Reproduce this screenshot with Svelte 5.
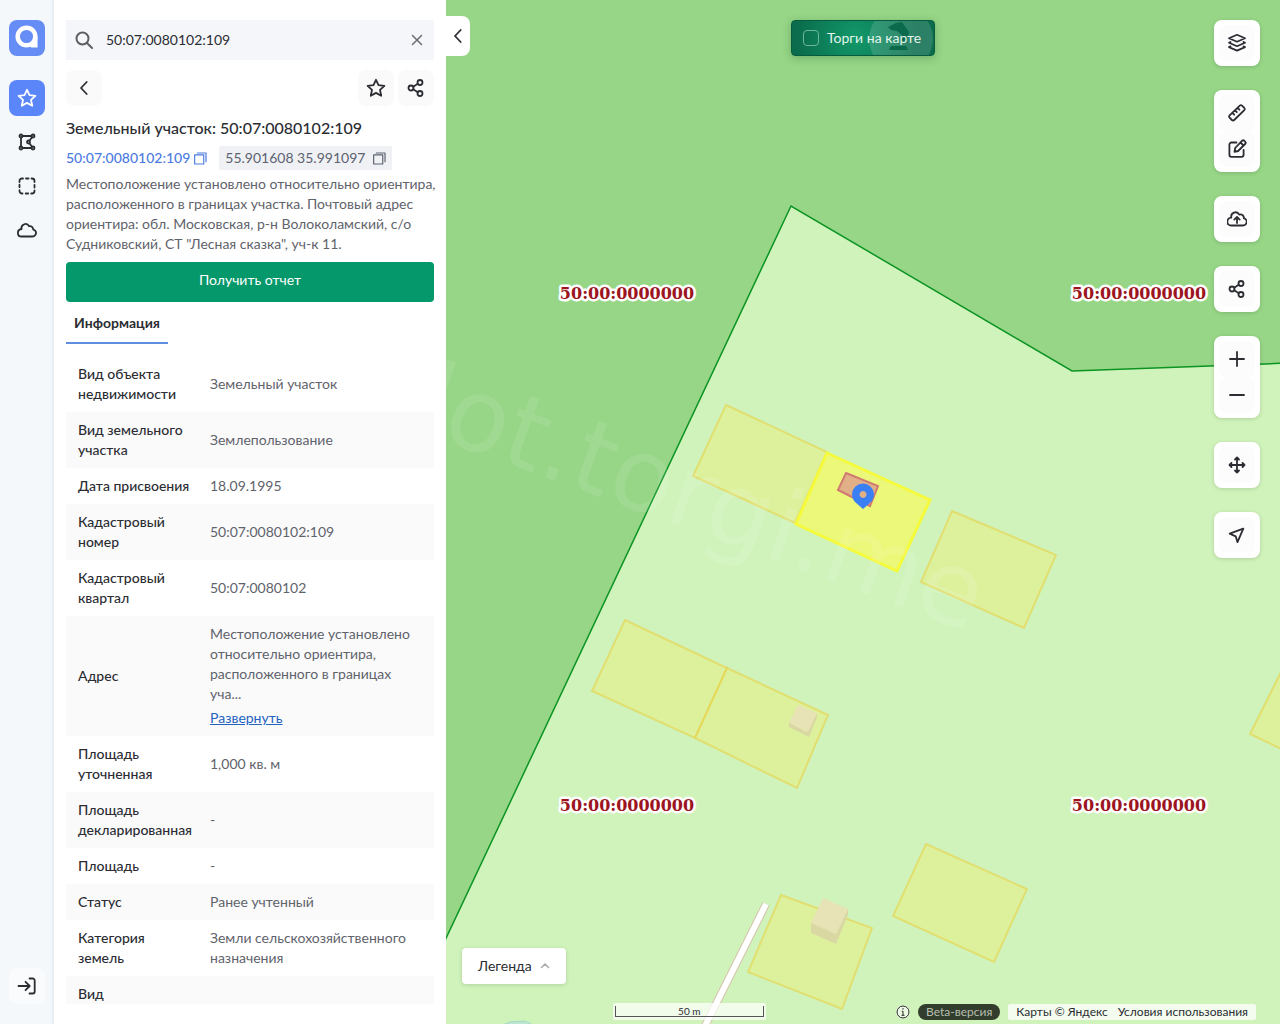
<script>
  let query = '50:07:0080102:109';
  let showTrades = false;

  const rows = [
    { label: 'Вид объекта недвижимости', value: 'Земельный участок' },
    { label: 'Вид земельного участка', value: 'Землепользование' },
    { label: 'Дата присвоения', value: '18.09.1995' },
    { label: 'Кадастровый номер', value: '50:07:0080102:109' },
    { label: 'Кадастровый квартал', value: '50:07:0080102' },
    {
      label: 'Адрес',
      value: 'Местоположение установлено относительно ориентира, расположенного в границах уча...',
      more: true
    },
    { label: 'Площадь уточненная', value: '1,000 кв. м' },
    { label: 'Площадь декларированная', value: '-' },
    { label: 'Площадь', value: '-' },
    { label: 'Статус', value: 'Ранее учтенный' },
    { label: 'Категория земель', value: 'Земли сельскохозяйственного назначения' },
    { label: 'Вид', value: '' }
  ];

  // Участки на карте
  const parcels = [
    '726,405 827,452 795,523 693,476',
    '952,511 1056,555 1024,628 921,582',
    '625,620 727,668 695,738 592,691',
    '727,668 828,715 797,788 695,738',
    '1292,650 1250,734 1292,754',
    '926,844 1027,889 994,962 893,916',
    '781,895 872,928 842,1009 748,972'
  ];

  const quarters = [
    [627, 299],
    [1139, 299],
    [627, 811],
    [1139, 811]
  ];

  const toolGroups = [
    [{ icon: 'layers', title: 'Слои' }],
    [{ icon: 'ruler', title: 'Линейка' }, { icon: 'edit', title: 'Рисование' }],
    [{ icon: 'upload', title: 'Загрузить' }],
    [{ icon: 'share', title: 'Поделиться' }],
    [{ icon: 'plus', title: 'Приблизить' }, { icon: 'minus', title: 'Отдалить' }],
    [{ icon: 'move', title: 'Переместить' }],
    [{ icon: 'locate', title: 'Моё местоположение' }]
  ];
</script>

{#snippet icon(name)}
  <svg class="icon" viewBox="0 0 20 20" aria-hidden="true">
    {#if name === 'star'}
      <path d="M10 1.800l2.500 5.400 5.900.7-4.400 4 1.200 5.900-5.200-2.900-5.200 2.900L6 11.900l-4.400-4 5.900-.7z" />
    {:else if name === 'share'}
      <circle cx="5" cy="10" r="2.500" /><circle cx="14" cy="4.500" r="2.500" /><circle cx="14" cy="15.500" r="2.500" />
      <path d="M7.200 8.700l4.600-2.900M7.200 11.300l4.600 2.900" />
    {:else if name === 'polygon'}
      <path d="M5.500 4h9M4 5.500v9M5.500 16h9M15 5.300l-2.600 3.500M12.400 11.200l2.600 3.500" />
      <circle cx="4" cy="4" r="1.500" /><circle cx="16" cy="4" r="1.500" /><circle cx="11.500" cy="10" r="1.500" />
      <circle cx="4" cy="16" r="1.500" /><circle cx="16" cy="16" r="1.500" />
    {:else if name === 'select'}
      <path d="M2.500 6V5A2.500 2.500 0 0 1 5 2.500h1M9 2.500h2.500M14.500 2.500h.5A2.500 2.500 0 0 1 17.500 5v1M17.500 9v2.500M17.500 14.500v.5a2.500 2.500 0 0 1-2.500 2.500h-.8M11.200 17.500H8.700M5.500 17.500H5A2.500 2.500 0 0 1 2.500 15v-.8M2.500 11.200V8.700" />
    {:else if name === 'cloud'}
      <path d="M4.500 16.500h11a3.500 3.500 0 0 0 2.600-5.800c-.8-.8-1.400-.9-1.800-1-.2-2.500-1.800-4-4.200-3.500C11 4.300 9 3.500 7.200 4.300 5.100 5 4.200 7 4.600 9c-2.200.2-3.700 1.800-3.700 3.900s1.500 3.600 3.600 3.600z" />
    {:else if name === 'upload'}
      <path d="M4 16.500h12a3.700 3.700 0 0 0 2.900-6c-.6-.8-1.300-1-2-1.100.2-2.500-1.900-4.600-4.700-3.800C11.200 3.700 9 2.900 7 3.600 4.900 4.400 3.900 6.500 4.300 8.700 2 9 .3 10.600.3 12.800S2 16.500 4 16.500z" />
      <path d="M10 14V8M7.300 10.600L10 8l2.700 2.600" />
    {:else if name === 'login'}
      <path d="M1.500 10h11M8.500 5.800l4.200 4.200-4.200 4.200M12.500 2.500h3.200a2 2 0 0 1 2 2v11a2 2 0 0 1-2 2h-3.200" />
    {:else if name === 'layers'}
      <path d="M10 1.800l8 3.500-8 3.500-8-3.500zM3.500 9L2 9.700l8 3.500 8-3.500-1.500-.7M3.500 13.400l-1.500.7 8 3.500 8-3.500-1.500-.7" />
    {:else if name === 'ruler'}
      <path d="M2.600 12.300L12.800 2.600a1.600 1.600 0 0 1 2.200 0l2.300 2.300a1.600 1.600 0 0 1 0 2.200L7.200 17a1.600 1.600 0 0 1-2.300 0l-2.300-2.400a1.600 1.600 0 0 1 0-2.300zM5.700 10.200l1.500 1.500M8.300 7.700l1.500 1.500M10.900 5.200l1.500 1.500" />
    {:else if name === 'edit'}
      <path d="M9.500 3.500H4.400a2 2 0 0 0-2 2v10.300a2 2 0 0 0 2 2h10.200a2 2 0 0 0 2-2v-5" />
      <path d="M15 1.900a1.700 1.700 0 0 1 2.400 0l.7.700a1.700 1.700 0 0 1 0 2.400l-7 7-3.600.8.700-3.800zM13.500 3.500l3 3" />
    {:else if name === 'plus'}
      <path d="M10 3v14M3 10h14" />
    {:else if name === 'minus'}
      <path d="M3 10h14" />
    {:else if name === 'move'}
      <path d="M10 2.500v15M2.500 10h15M8 4.500l2-2 2 2M8 15.500l2 2 2-2M4.500 8l-2 2 2 2M15.500 8l2 2-2 2" />
    {:else if name === 'locate'}
      <path d="M16.300 3.700L2.700 8.700l6 2.600 1.800 5.900z" />
    {:else if name === 'back'}
      <path d="M12.700 4L7 10l5.700 6" />
    {:else if name === 'search'}
      <circle cx="8.500" cy="8.500" r="6" /><path d="M13 13l5 5" />
    {:else if name === 'close'}
      <path d="M5.500 5.500l9 9M14.500 5.500l-9 9" />
    {:else if name === 'copy'}
      <path d="M1 4.500h14v14H1zM5 1.500h13.500V15" />
    {:else if name === 'up'}
      <path d="M3 13l7-7 7 7" />
    {/if}
  </svg>
{/snippet}

<div class="app">
  <nav class="sidebar">
    <a class="logo" href="#home" aria-label="На главную">
      <svg viewBox="0 0 36 36" aria-hidden="true">
        <circle cx="17.500" cy="16.500" r="8.800" />
        <path d="M26.300 16.500v8.800h-4.500" />
      </svg>
    </a>
    <button class="nav-btn active" aria-label="Избранное">{@render icon('star')}</button>
    <button class="nav-btn" aria-label="Полигон">{@render icon('polygon')}</button>
    <button class="nav-btn" aria-label="Выделение">{@render icon('select')}</button>
    <button class="nav-btn" aria-label="Облако">{@render icon('cloud')}</button>
    <button class="nav-btn login" aria-label="Войти">{@render icon('login')}</button>
  </nav>

  <aside class="panel">
    <div class="search">
      {@render icon('search')}
      <input type="text" aria-label="Поиск" bind:value={query} />
      <button class="clear" aria-label="Очистить" on:click={() => (query = '')}>{@render icon('close')}</button>
    </div>

    <div class="actions">
      <button class="soft-btn" aria-label="Назад">{@render icon('back')}</button>
      <span class="spacer"></span>
      <button class="soft-btn" aria-label="В избранное">{@render icon('star')}</button>
      <button class="soft-btn" aria-label="Поделиться">{@render icon('share')}</button>
    </div>

    <h1>Земельный участок: 50:07:0080102:109</h1>

    <div class="ids">
      <button class="cad">50:07:0080102:109 {@render icon('copy')}</button>
      <button class="coords">55.901608 35.991097 {@render icon('copy')}</button>
    </div>

    <p class="address">
      Местоположение установлено относительно ориентира, расположенного в границах участка. Почтовый
      адрес ориентира: обл. Московская, р-н Волоколамский, с/о Судниковский, СТ "Лесная сказка", уч-к 11.
    </p>

    <button class="report">Получить отчет</button>

    <div class="tabs" role="tablist">
      <button role="tab" aria-selected="true">Информация</button>
    </div>

    <div class="info">
      <table>
        <tbody>
          {#each rows as row}
            <tr>
              <th scope="row">{row.label}</th>
              <td>
                {row.value}
                {#if row.more}
                  <a href="#address">Развернуть</a>
                {/if}
              </td>
            </tr>
          {/each}
        </tbody>
      </table>
    </div>
  </aside>

  <main class="map">
    <svg class="canvas" viewBox="446 0 834 1024" preserveAspectRatio="xMinYMin slice">
      <polygon class="settlement" points="440,951 791,206 1072,371 1290,363 1290,1030 440,1030" />

      <!-- дорога -->
      <path class="road-edge" d="M766 904L703 1030" />
      <path class="road" d="M766 904L703 1030" />
      <path class="water" d="M500 1026l10-4 15-1 8 4" />

      {#each parcels as points}
        <polygon class="parcel" {points} />
      {/each}

      <!-- строения -->
      <polygon class="wall" points="789,721 806,732 817,713 817,717 809,737 789,727" />
      <polygon class="roof" points="798,705 817,713 808,732 789,723" />
      <polygon class="wall" points="811,922 836,934 848,908 848,915 836,944 811,933" />
      <polygon class="roof" points="823,898 848,909 836,934 811,923" />

      <polygon class="selected" points="827,453 930,500 897,571 796,524" />
      <polygon class="building" points="846,473 878,486 870,506 838,490" />

      <text class="watermark" transform="translate(412 429) rotate(20)">lot.torgi.me</text>

      <path class="pin" fill-rule="evenodd" d="M863 509l-8.500-7.500a11 11 0 1 1 17 0zM863 491a3.500 3.500 0 1 0 .1 0z" />

      {#each quarters as [x, y]}
        <text class="quarter" {x} {y}>50:00:0000000</text>
      {/each}
    </svg>

    <button class="collapse" aria-label="Свернуть панель">{@render icon('back')}</button>

    <label class="trades">
      <svg class="gavel" viewBox="0 0 66 36" aria-hidden="true">
        <circle cx="33" cy="18" r="32" />
        <path d="M23 25h15l2 4H21zM28 2l6-1 7 10-2 8-6 1 1-6-5-4-6-1-3-3z" />
      </svg>
      <input type="checkbox" bind:checked={showTrades} />
      <span>Торги на карте</span>
    </label>

    <div class="tools">
      {#each toolGroups as group}
        <div class="tool-group">
          {#each group as tool}
            <button class="tool" aria-label={tool.title}>{@render icon(tool.icon)}</button>
          {/each}
        </div>
      {/each}
    </div>

    <button class="legend">Легенда {@render icon('up')}</button>

    <div class="scale"><div>50 m</div></div>

    <footer class="credits">
      <svg viewBox="0 0 14 14" aria-hidden="true">
        <circle cx="7" cy="7" r="6" />
        <path d="M7 3v1.500M5.800 6.200H7V10M5.500 10.300h3" />
      </svg>
      <span class="beta">Beta-версия</span>
      <span class="copy">
        <span>Карты © Яндекс</span>
        <a href="#terms">Условия использования</a>
      </span>
    </footer>
  </main>
</div>

<style>
  :global(body) {
    margin: 0;
    font-family: 'Lato', 'Roboto', sans-serif;
    font-size: 14px;
    line-height: 20px;
    color: #2b2d33;
  }

  .app {
    display: grid;
    grid-template-columns: 54px 392px 1fr;
    height: 100vh;
    overflow: hidden;
  }

  button {
    font: inherit;
    color: inherit;
    border: none;
    padding: 0;
    background: none;
    cursor: pointer;
  }

  .icon {
    width: 20px;
    height: 20px;
    flex: none;
    fill: none;
    stroke: currentColor;
    stroke-width: 1.8;
    stroke-linecap: round;
    stroke-linejoin: round;
  }

  /* Левая панель навигации */
  .sidebar {
    box-sizing: border-box;
    display: flex;
    flex-direction: column;
    align-items: center;
    gap: 8px;
    padding: 20px 7px 20px 9px;
    background: #f4f8fa;
    border-right: 2px solid #e8eef2;
  }

  .logo {
    width: 36px;
    height: 36px;
    margin-bottom: 16px;
    border-radius: 8px;
    background: #668cf5;
  }

  .logo svg {
    display: block;
    fill: none;
    stroke: #fff;
    stroke-width: 4.5;
  }

  .nav-btn,
  .soft-btn {
    display: flex;
    align-items: center;
    justify-content: center;
    width: 36px;
    height: 36px;
    border-radius: 8px;
  }

  .nav-btn.active {
    color: #fff;
    background: #5b86fa;
  }

  .nav-btn.login {
    margin-top: auto;
    background: #f9fbfc;
  }

  /* Карточка объекта */
  .panel {
    display: flex;
    flex-direction: column;
    min-height: 0;
    padding: 20px 12px;
    background: #fff;
  }

  .search {
    display: flex;
    align-items: center;
    height: 40px;
    flex: none;
    padding: 0 7px 0 8px;
    background: #f5f6fa;
  }

  .search > .icon {
    color: #5c5e63;
    stroke-width: 2;
  }

  .search input {
    flex: 1;
    min-width: 0;
    padding: 0 12px;
    border: none;
    outline: none;
    background: none;
    font: inherit;
    color: #2b2d33;
  }

  .clear {
    display: flex;
    color: #6a6c72;
  }

  .clear .icon {
    stroke-width: 1.5;
  }

  .actions {
    display: flex;
    gap: 4px;
    margin: 10px 0 12px;
  }

  .spacer {
    flex: 1;
  }

  .soft-btn {
    background: #fafafb;
  }

  h1 {
    margin: 0;
    font-size: 16px;
    line-height: 20px;
    font-weight: 500;
  }

  .ids {
    display: flex;
    gap: 12px;
    margin: 8px 0 4px;
  }

  .ids button {
    display: flex;
    align-items: center;
    gap: 4px;
    height: 24px;
    color: #5c6270;
  }

  .ids .icon {
    width: 13px;
    height: 13px;
  }

  .ids .cad {
    color: #4c7be0;
    font-weight: 500;
  }

  .ids .coords {
    gap: 8px;
    padding: 0 6px;
    border-radius: 2px;
    background: #eff1f5;
  }

  .address {
    margin: 0 -8px 8px 0;
    color: #5f636b;
  }

  .report {
    flex: none;
    height: 40px;
    padding-bottom: 4px;
    border-radius: 4px;
    background: #05986a;
    color: #fff;
  }

  .tabs {
    display: flex;
    margin: 2px 0 12px;
  }

  .tabs button {
    height: 40px;
    padding: 0 8px;
    border-bottom: 2px solid #5f8de0;
    font-weight: 700;
  }

  .info {
    flex: 1;
    min-height: 0;
    overflow: hidden;
  }

  table {
    width: 100%;
    table-layout: fixed;
    border-collapse: collapse;
  }

  tr:nth-child(even) {
    background: #fafafb;
  }

  th,
  td {
    padding: 8px 12px;
    text-align: left;
    vertical-align: middle;
  }

  th {
    width: 116px;
    padding-right: 4px;
    font-weight: 500;
  }

  td {
    color: #5f636b;
  }

  td a {
    display: block;
    margin-top: 4px;
    color: #2563c0;
  }

  /* Карта */
  .map {
    position: relative;
    min-width: 0;
    overflow: hidden;
    background: #96d686;
  }

  .canvas {
    position: absolute;
    inset: 0;
    width: 100%;
    height: 100%;
  }

  .settlement {
    fill: #d0f3bb;
    stroke: #0b9422;
    stroke-width: 1.5;
  }

  .parcel {
    fill: #eaf080;
    fill-opacity: 0.5;
    stroke: #e8d24a;
    stroke-opacity: 0.6;
    stroke-width: 2;
  }

  .selected {
    fill: #ebf87a;
    stroke: #f5fa3c;
    stroke-width: 3;
  }

  .building {
    fill: #e2b087;
    stroke: #d07a72;
    stroke-width: 2;
  }

  .roof {
    fill: #e7e3b6;
  }

  .wall {
    fill: #dad8a2;
  }

  .road-edge {
    stroke: #d3c3ac;
    stroke-width: 8;
  }

  .road {
    stroke: #fff;
    stroke-width: 6;
  }

  .water {
    fill: #bfe6d0;
    stroke: #a5d8c8;
  }

  .pin {
    fill: #3b7ff5;
  }

  .watermark {
    font-family: 'DejaVu Sans', sans-serif;
    font-size: 102px;
    fill: #fff;
    fill-opacity: 0.1;
  }

  .quarter {
    font-family: 'DejaVu Serif', serif;
    font-size: 16px;
    font-weight: 700;
    text-anchor: middle;
    fill: #9c1420;
    stroke: #fff;
    stroke-width: 5;
    stroke-linejoin: round;
    paint-order: stroke;
  }

  .collapse {
    position: absolute;
    top: 16px;
    left: 0;
    display: flex;
    align-items: center;
    justify-content: center;
    width: 24px;
    height: 40px;
    border-radius: 0 8px 8px 0;
    background: #fff;
  }

  .trades {
    position: absolute;
    top: 20px;
    left: 50%;
    transform: translateX(-50%);
    box-sizing: border-box;
    display: flex;
    align-items: center;
    gap: 8px;
    width: 144px;
    height: 36px;
    padding: 0 11px;
    overflow: hidden;
    border: 1px solid #075c40;
    border-radius: 4px;
    background: radial-gradient(circle at 45% 50%, #12996a, #0a6c4c 75%);
    box-shadow: 0 2px 8px rgba(0, 60, 30, 0.25);
    color: #e2f5ec;
    white-space: nowrap;
  }

  .trades input {
    appearance: none;
    flex: none;
    width: 16px;
    height: 16px;
    margin: 0;
    border: 1px solid #6cb898;
    border-radius: 4px;
  }

  .trades span {
    position: relative;
  }

  .gavel {
    position: absolute;
    right: 0;
    top: 0;
    width: 66px;
    height: 36px;
  }

  .gavel circle {
    fill: #fff;
    fill-opacity: 0.14;
  }

  .gavel path {
    fill: #0a6a4b;
  }

  .tools {
    position: absolute;
    top: 20px;
    right: 20px;
    display: flex;
    flex-direction: column;
    gap: 24px;
  }

  .tool-group {
    padding: 5px;
    border-radius: 8px;
    background: #fff;
    box-shadow: 0 1px 4px rgba(0, 0, 0, 0.15);
  }

  .tool {
    display: flex;
    align-items: center;
    justify-content: center;
    width: 36px;
    height: 36px;
    border-radius: 8px;
    background: #fcfcfd;
  }

  .legend {
    position: absolute;
    left: 16px;
    bottom: 40px;
    display: flex;
    align-items: center;
    gap: 8px;
    height: 36px;
    padding: 0 16px;
    border-radius: 4px;
    background: #fff;
    box-shadow: 0 1px 4px rgba(0, 0, 0, 0.15);
  }

  .legend .icon {
    width: 10px;
    height: 10px;
    color: #a8a8a8;
    stroke-width: 3;
  }

  .scale {
    position: absolute;
    left: 20%;
    bottom: 4px;
    padding: 3px 2px;
    border-radius: 2px;
    background: rgba(255, 255, 255, 0.7);
    font-size: 10px;
    line-height: 10px;
    text-align: center;
  }

  .scale div {
    width: 147px;
    border: 1px solid #555;
    border-top: none;
  }

  .credits {
    position: absolute;
    right: 24px;
    bottom: 4px;
    display: flex;
    align-items: center;
    gap: 8px;
    font-size: 12px;
    line-height: 16px;
  }

  .credits svg {
    width: 14px;
    height: 14px;
    border-radius: 7px;
    background: rgba(255, 255, 255, 0.6);
    fill: none;
    stroke: #222;
  }

  .beta {
    padding: 0 8px;
    border-radius: 8px;
    background: #333d2e;
    color: #b5bfae;
  }

  .copy {
    display: flex;
    gap: 10px;
    padding: 0 8px;
    border-radius: 2px;
    background: rgba(255, 255, 255, 0.75);
    white-space: nowrap;
  }

  .copy a {
    color: inherit;
    text-decoration: none;
  }
</style>
